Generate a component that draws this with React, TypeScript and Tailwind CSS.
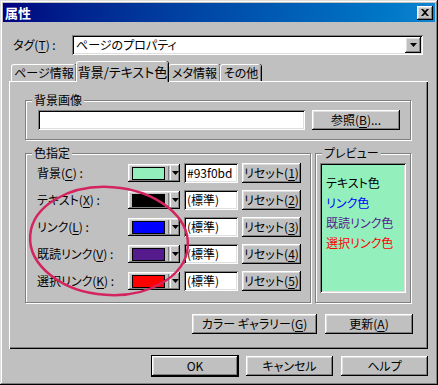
import type { ReactNode } from 'react';

// Win98 bevels
const raised =
  'bg-[#c0c0c0] shadow-[inset_-1px_-1px_#000,inset_1px_1px_#fff,inset_-2px_-2px_#808080,inset_2px_2px_#dfdfdf]';
const sunken =
  'shadow-[inset_1px_1px_#808080,inset_-1px_-1px_#fff,inset_2px_2px_#000,inset_-2px_-2px_#dfdfdf]';
const etched = 'border border-[#808080] shadow-[inset_1px_1px_#fff,1px_1px_#fff]';

function U({ children }: { children: ReactNode }) {
  return <span className="underline underline-offset-[2px]">{children}</span>;
}

function Button({
  children,
  className = '',
  isDefault = false,
}: {
  children: ReactNode;
  className?: string;
  isDefault?: boolean;
}) {
  return (
    <button
      type="button"
      className={`${raised} ${
        isDefault ? 'outline outline-1 outline-black' : ''
      } flex h-[20px] items-center justify-center whitespace-nowrap text-[12px] leading-none text-black ${className}`}
    >
      {children}
    </button>
  );
}

function DownArrow() {
  return (
    <svg width="7" height="4" viewBox="0 0 7 4">
      <path d="M0 0h7L3.5 4z" fill="#000" />
    </svg>
  );
}

function GroupBox({
  label,
  className = '',
  children,
}: {
  label: string;
  className?: string;
  children: ReactNode;
}) {
  return (
    <div className={`relative ${etched} ${className}`}>
      <span className="absolute -top-[8px] left-[6px] bg-[#c0c0c0] px-[2px] text-[12px] leading-[14px]">
        {label}
      </span>
      {children}
    </div>
  );
}

type ColorRow = { label: ReactNode; color: string; value: string; n: string };

const rows: ColorRow[] = [
  { label: <>背景(<U>C</U>) :</>, color: '#93f0bd', value: '#93f0bd', n: '1' },
  { label: <>テキスト(<U>X</U>) :</>, color: '#000000', value: '(標準)', n: '2' },
  { label: <>リンク(<U>L</U>) :</>, color: '#0000ff', value: '(標準)', n: '3' },
  { label: <>既読リンク(<U>V</U>) :</>, color: '#551a8b', value: '(標準)', n: '4' },
  { label: <>選択リンク(<U>K</U>) :</>, color: '#ff0000', value: '(標準)', n: '5' },
];

function ColorButton({ color }: { color: string }) {
  return (
    <div className={`${raised} my-[1px] flex h-[18px] w-[52px] items-center pl-[4px]`}>
      <div className="h-[13px] w-[33px] border border-black" style={{ backgroundColor: color }} />
      <div className="ml-[3px] h-[14px] w-[2px] border-l border-[#808080] shadow-[1px_0_#fff]" />
      <div className="ml-[2px] flex items-center">
        <DownArrow />
      </div>
    </div>
  );
}

function Tab({ children, active = false, className = '' }: { children: ReactNode; active?: boolean; className?: string }) {
  return (
    <div
      className={`flex items-center justify-center whitespace-nowrap rounded-t-[3px] border-l border-t border-white bg-[#c0c0c0] shadow-[inset_-1px_0_#808080,1px_0_#000] text-[12px] leading-none ${
        active ? 'relative z-10 -mb-[1px] h-[21px] pb-[2px] text-[13px]' : 'h-[17px]'
      } ${className}`}
    >
      {children}
    </div>
  );
}

export default function App() {
  return (
    <div className="relative h-[385px] w-[438px] overflow-hidden bg-[#c0c0c0] font-['Noto_Sans_CJK_JP','Noto_Sans',sans-serif] text-[12px] text-black [font-feature-settings:'palt']">
      <div className="flex h-full w-full flex-col p-[3px] shadow-[inset_-1px_-1px_#000,inset_1px_1px_#dfdfdf,inset_-2px_-2px_#808080,inset_2px_2px_#fff]">
        {/* title bar */}
        <div className="flex h-[19px] items-center justify-between bg-gradient-to-r from-[#000080] to-[#1084d0] pl-[2px] pr-[2px]">
          <span className="text-[13px] font-bold leading-none text-white">属性</span>
          <div className={`${raised} flex h-[14px] w-[16px] items-center justify-center`}>
            <svg width="8" height="7" viewBox="0 0 8 7">
              <path d="M0 0h2l2 2 2-2h2L5 3.5 8 7H6L4 5 2 7H0l3-3.5z" fill="#000" />
            </svg>
          </div>
        </div>

        {/* tag row */}
        <div className="mt-[13px] flex h-[20px] items-center">
          <span className="ml-[10px] w-[59px] leading-none">
            タグ(<U>T</U>) :
          </span>
          <div className={`${sunken} flex h-[20px] w-[351px] items-center bg-white pl-[4px] pr-[2px]`}>
            <span className="flex-1 leading-none">ページのプロパティ</span>
            <div className={`${raised} flex h-[16px] w-[16px] items-center justify-center`}>
              <DownArrow />
            </div>
          </div>
        </div>

        {/* tabs */}
        <div className="ml-[8px] mt-[7px] flex h-[19px] items-end">
          <Tab className="w-[65px]">ページ情報</Tab>
          <Tab active className="w-[92px]">
            背景/テキスト色
          </Tab>
          <Tab className="w-[52px]">メタ情報</Tab>
          <Tab className="w-[41px]">その他</Tab>
        </div>

        {/* tab panel */}
        <div className="ml-[6px] flex h-[268px] w-[419px] flex-col pl-[16px] pt-[19px] shadow-[inset_1px_1px_#fff,inset_-1px_-1px_#000,inset_-2px_-2px_#808080]">
          <GroupBox label="背景画像" className="h-[40px] w-[386px]">
            <div className="flex pl-[12px] pt-[9px]">
              <div className={`${sunken} h-[20px] w-[267px] bg-white`} />
              <Button className="ml-[7px] w-[88px]">
                参照(<U>B</U>)...
              </Button>
            </div>
          </GroupBox>

          <div className="mt-[13px] flex gap-[4px]">
            <GroupBox label="色指定" className="h-[150px] w-[286px]">
              <div className="flex flex-col gap-[7px] pl-[11px] pt-[9px]">
                {rows.map((row) => (
                  <div key={row.n} className="flex h-[20px] items-center">
                    <span className="w-[91px] whitespace-nowrap leading-none">{row.label}</span>
                    <ColorButton color={row.color} />
                    <div className={`${sunken} ml-[4px] flex h-[20px] w-[54px] items-center bg-white pl-[3px]`}>
                      <span className="whitespace-nowrap text-[12px] leading-none">{row.value}</span>
                    </div>
                    <Button className="ml-[4px] w-[59px]">
                      リセット(<U>{row.n}</U>)
                    </Button>
                  </div>
                ))}
              </div>
            </GroupBox>

            <GroupBox label="プレビュー" className="h-[150px] w-[96px]">
              <div className="px-[4px] pt-[9px]">
                <div className={`${sunken} h-[130px] w-[86px] bg-[#93f0bd] pl-[6px] pt-[10px] text-[12px] leading-[20px]`}>
                  <div className="text-black">テキスト色</div>
                  <div className="text-[#0000ff]">リンク色</div>
                  <div className="text-[#551a8b]">既読リンク色</div>
                  <div className="text-[#ff0000]">選択リンク色</div>
                </div>
              </div>
            </GroupBox>
          </div>

          <div className="mt-[11px] flex justify-end gap-[8px] pr-[15px]">
            <Button className="w-[125px]">
              カラー ギャラリー(<U>G</U>)
            </Button>
            <Button className="w-[88px]">
              更新(<U>A</U>)
            </Button>
          </div>
        </div>

        {/* dialog buttons */}
        <div className="mt-[7px] flex justify-end gap-[8px] pr-[7px]">
          <Button isDefault className="w-[86px]">
            OK
          </Button>
          <Button className="w-[87px]">キャンセル</Button>
          <Button className="w-[87px]">ヘルプ</Button>
        </div>
      </div>

      {/* hand-drawn annotation ellipse */}
      <svg className="pointer-events-none absolute left-0 top-0" width="438" height="385" viewBox="0 0 438 385">
        <ellipse
          cx="109"
          cy="241"
          rx="79"
          ry="54"
          transform="rotate(4 109 241)"
          fill="none"
          stroke="#d3245f"
          strokeWidth="2.5"
        />
      </svg>
    </div>
  );
}
